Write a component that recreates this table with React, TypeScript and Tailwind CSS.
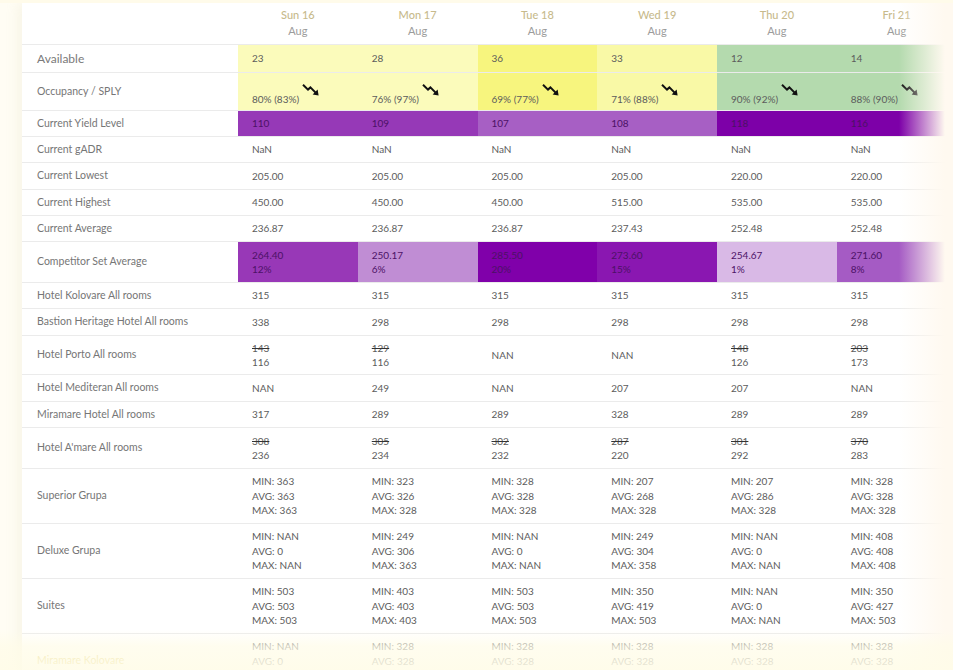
import React from "react";

type Cell = { bg?: string; dark?: boolean; lines: React.ReactNode[]; icon?: boolean };
type RowDef = { label: string; h: string; big?: boolean; gold?: boolean; cells: Cell[] };

const days = ["Sun 16", "Mon 17", "Tue 18", "Wed 19", "Thu 20", "Fri 21"];
const availBg = ["#fbfbbb", "#fbfbbb", "#f7f57e", "#f9f9a6", "#b4daae", "#b4daae"];
const yieldBg = ["#9639b7", "#9639b7", "#a75fc4", "#a75fc4", "#7d00a8", "#7d00a8"];
const compBg = ["#9838b7", "#c08dd4", "#8000aa", "#8a17b1", "#d9b9e6", "#a55bc4"];

const Strike = ({ v }: { v: string }) => <span className="line-through decoration-[#333]">{v}</span>;

const single = (vals: string[], bgs?: string[], dark?: boolean): Cell[] =>
  vals.map((v, i) => ({ lines: [v], bg: bgs ? bgs[i] : undefined, dark }));

const mam = (vals: [string, string, string][]): Cell[] =>
  vals.map((v) => ({ lines: [`MIN: ${v[0]}`, `AVG: ${v[1]}`, `MAX: ${v[2]}`] }));

const rows: RowDef[] = [
  { label: "Available", h: "h-[28px]", big: true, cells: single(["23", "28", "36", "33", "12", "14"], availBg) },
  {
    label: "Occupancy / SPLY",
    h: "h-[38px]",
    cells: ["80% (83%)", "76% (97%)", "69% (77%)", "71% (88%)", "90% (92%)", "88% (90%)"].map((v, i) => ({
      lines: [v],
      bg: availBg[i],
      icon: true,
    })),
  },
  { label: "Current Yield Level", h: "h-[26px]", cells: single(["110", "109", "107", "108", "118", "116"], yieldBg, true) },
  { label: "Current gADR", h: "h-[26px]", cells: single(["NaN", "NaN", "NaN", "NaN", "NaN", "NaN"]) },
  { label: "Current Lowest", h: "h-[27px]", cells: single(["205.00", "205.00", "205.00", "205.00", "220.00", "220.00"]) },
  { label: "Current Highest", h: "h-[26px]", cells: single(["450.00", "450.00", "450.00", "515.00", "535.00", "535.00"]) },
  { label: "Current Average", h: "h-[26px]", cells: single(["236.87", "236.87", "236.87", "237.43", "252.48", "252.48"]) },
  {
    label: "Competitor Set Average",
    h: "h-[41px]",
    cells: [
      ["264.40", "12%"],
      ["250.17", "6%"],
      ["285.50", "20%"],
      ["273.60", "15%"],
      ["254.67", "1%"],
      ["271.60", "8%"],
    ].map((v, i) => ({ lines: v, bg: compBg[i], dark: true })),
  },
  { label: "Hotel Kolovare All rooms", h: "h-[26px]", cells: single(["315", "315", "315", "315", "315", "315"]) },
  { label: "Bastion Heritage Hotel All rooms", h: "h-[27px]", cells: single(["338", "298", "298", "298", "298", "298"]) },
  {
    label: "Hotel Porto All rooms",
    h: "h-[39px]",
    cells: [
      { lines: [<Strike v="143" />, "116"] },
      { lines: [<Strike v="129" />, "116"] },
      { lines: ["NAN"] },
      { lines: ["NAN"] },
      { lines: [<Strike v="148" />, "126"] },
      { lines: [<Strike v="203" />, "173"] },
    ],
  },
  { label: "Hotel Mediteran All rooms", h: "h-[27px]", cells: single(["NAN", "249", "NAN", "207", "207", "NAN"]) },
  { label: "Miramare Hotel All rooms", h: "h-[26px]", cells: single(["317", "289", "289", "328", "289", "289"]) },
  {
    label: "Hotel A'mare All rooms",
    h: "h-[41px]",
    cells: [
      ["308", "236"],
      ["305", "234"],
      ["302", "232"],
      ["287", "220"],
      ["301", "292"],
      ["370", "283"],
    ].map((v) => ({ lines: [<Strike v={v[0]} />, v[1]] })),
  },
  {
    label: "Superior Grupa",
    h: "h-[55px]",
    cells: mam([
      ["363", "363", "363"],
      ["323", "326", "328"],
      ["328", "328", "328"],
      ["207", "268", "328"],
      ["207", "286", "328"],
      ["328", "328", "328"],
    ]),
  },
  {
    label: "Deluxe Grupa",
    h: "h-[55px]",
    cells: mam([
      ["NAN", "0", "NAN"],
      ["249", "306", "363"],
      ["NAN", "0", "NAN"],
      ["249", "304", "358"],
      ["NAN", "0", "NAN"],
      ["408", "408", "408"],
    ]),
  },
  {
    label: "Suites",
    h: "h-[55px]",
    cells: mam([
      ["503", "503", "503"],
      ["403", "403", "403"],
      ["503", "503", "503"],
      ["350", "419", "503"],
      ["NAN", "0", "NAN"],
      ["350", "427", "503"],
    ]),
  },
  {
    label: "Miramare Kolovare",
    h: "h-[55px]",
    gold: true,
    cells: mam([
      ["NAN", "0", "NAN"],
      ["328", "328", "328"],
      ["328", "328", "328"],
      ["328", "328", "328"],
      ["328", "328", "328"],
      ["328", "328", "328"],
    ]),
  },
];

const TrendIcon = () => (
  <svg width="18" height="14" viewBox="0 0 18 14" className="shrink-0">
    <polyline points="1,1.8 6,6.6 8.4,4.4 13.6,9.6" fill="none" stroke="#111" strokeWidth="2" strokeLinejoin="miter" />
    <polygon points="16.6,12.6 15.6,6.6 10.6,11.6" fill="#111" />
  </svg>
);

const GRID = "grid grid-cols-[216px_repeat(6,119.75px)]";

export default function App() {
  return (
    <div
      className="relative w-[953px] h-[670px] overflow-hidden bg-[#fffdf4] pt-[3px] pl-[22px]"
      style={{ fontFamily: "Lato, 'Noto Sans', sans-serif" }}
    >
      <div className="bg-white w-[1000px] min-h-[700px] shadow-[-4px_0_12px_rgba(200,190,150,0.14)]">
        {/* header */}
        <div className={`${GRID} h-[42px] border-b border-[#ebebeb]`}>
          <div />
          {days.map((d) => (
            <div key={d} className="flex flex-col items-center justify-center leading-[16px] text-[11px] pb-[2px]">
              <span className="text-[#c7ba8c] font-medium">{d}</span>
              <span className="text-[#9c9c9c]">Aug</span>
            </div>
          ))}
        </div>
        {rows.map((r) => (
          <div key={r.label} className={`${GRID} ${r.h} border-b border-[#ebebeb]`}>
            <div
              className={`flex items-center pl-[15px] ${
                r.big ? "text-[12px] text-[#7a7a7a]" : "text-[10.5px] text-[#767676]"
              } ${r.gold ? "!text-[#d9c04a]" : ""}`}
            >
              {r.label}
            </div>
            {r.cells.map((c, i) => (
              <div
                key={i}
                className={`flex pl-[14px] text-[10px] ${c.dark ? "text-[#4c1266]" : "text-[#5c5c5c]"} ${
                  c.icon ? "flex-row items-start" : "flex-col justify-center leading-[14.5px]"
                }`}
                style={c.bg ? { backgroundColor: c.bg } : undefined}
              >
                {c.icon ? (
                  <>
                    <span className="mt-[19px] leading-[14px]">{c.lines[0]}</span>
                    <span className="mt-[10px] ml-[3px]">
                      <TrendIcon />
                    </span>
                  </>
                ) : (
                  c.lines.map((l, j) => <span key={j}>{l}</span>)
                )}
              </div>
            ))}
          </div>
        ))}
      </div>
      {/* right fade */}
      <div className="absolute top-0 right-0 bottom-0 w-[54px] bg-linear-to-r from-[#fff9f000] to-[#fff9f0] to-85%" />
      {/* top band */}
      <div className="absolute top-0 left-0 right-0 h-[3px] bg-[#fffbea]" />
      {/* bottom fade */}
      <div className="absolute left-0 right-0 bottom-0 h-[40px] bg-linear-to-b from-[#fffce800] via-[#fffce8b3] via-40% to-[#fffce8e6]" />
    </div>
  );
}
